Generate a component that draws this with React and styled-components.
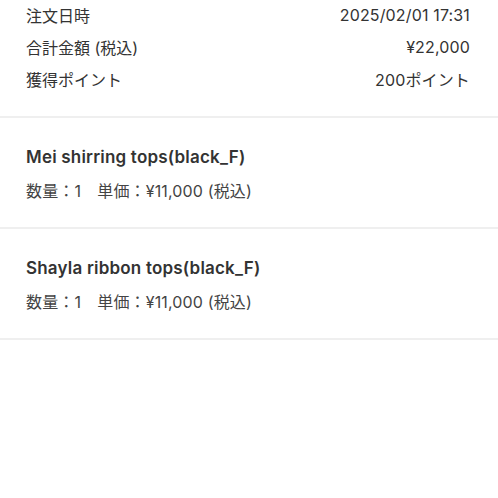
import React from "react";
import styled, { createGlobalStyle } from "styled-components";

const Global = createGlobalStyle`
  html, body { margin: 0; padding: 0; background: #fff; }
  body { font-family: Inter, "Noto Sans CJK JP", sans-serif; color: #333; }
`;

const Page = styled.div`
  width: 498px;
  background: #fff;
`;

const Summary = styled.section`
  display: flex;
  flex-direction: column;
  gap: 2px;
  padding: 0 28px 22px 26px;
  border-bottom: 2px solid #efefef;
`;

const Row = styled.div`
  display: flex;
  justify-content: space-between;
  align-items: center;
  height: 30px;
  font-size: 16px;
  color: #333;
`;

const Value = styled.span`
  letter-spacing: 0.15px;
`;

const Item = styled.section`
  display: flex;
  flex-direction: column;
  gap: 12px;
  padding: 28px 26px 25px;
  border-bottom: 2px solid #efefef;
`;

const Name = styled.div`
  font-weight: 600;
  font-size: 17px;
  line-height: 22px;
  letter-spacing: 0.2px;
  color: #333;
`;

const Detail = styled.div`
  font-size: 16px;
  line-height: 22px;
  letter-spacing: 0.15px;
  color: #444;
  white-space: pre;
`;

const summary = [
  ["注文日時", "2025/02/01 17:31"],
  ["合計金額 (税込)", "¥22,000"],
  ["獲得ポイント", "200ポイント"],
];

const items = [
  { name: "Mei shirring tops(black_F)", qty: 1, price: "¥11,000" },
  { name: "Shayla ribbon tops(black_F)", qty: 1, price: "¥11,000" },
];

export default function App() {
  return (
    <Page>
      <Global />
      <Summary>
        {summary.map(([k, v]) => (
          <Row key={k}>
            <span>{k}</span>
            <Value>{v}</Value>
          </Row>
        ))}
      </Summary>
      {items.map((it) => (
        <Item key={it.name}>
          <Name>{it.name}</Name>
          <Detail>{`数量：${it.qty}　単価：${it.price} (税込)`}</Detail>
        </Item>
      ))}
    </Page>
  );
}
